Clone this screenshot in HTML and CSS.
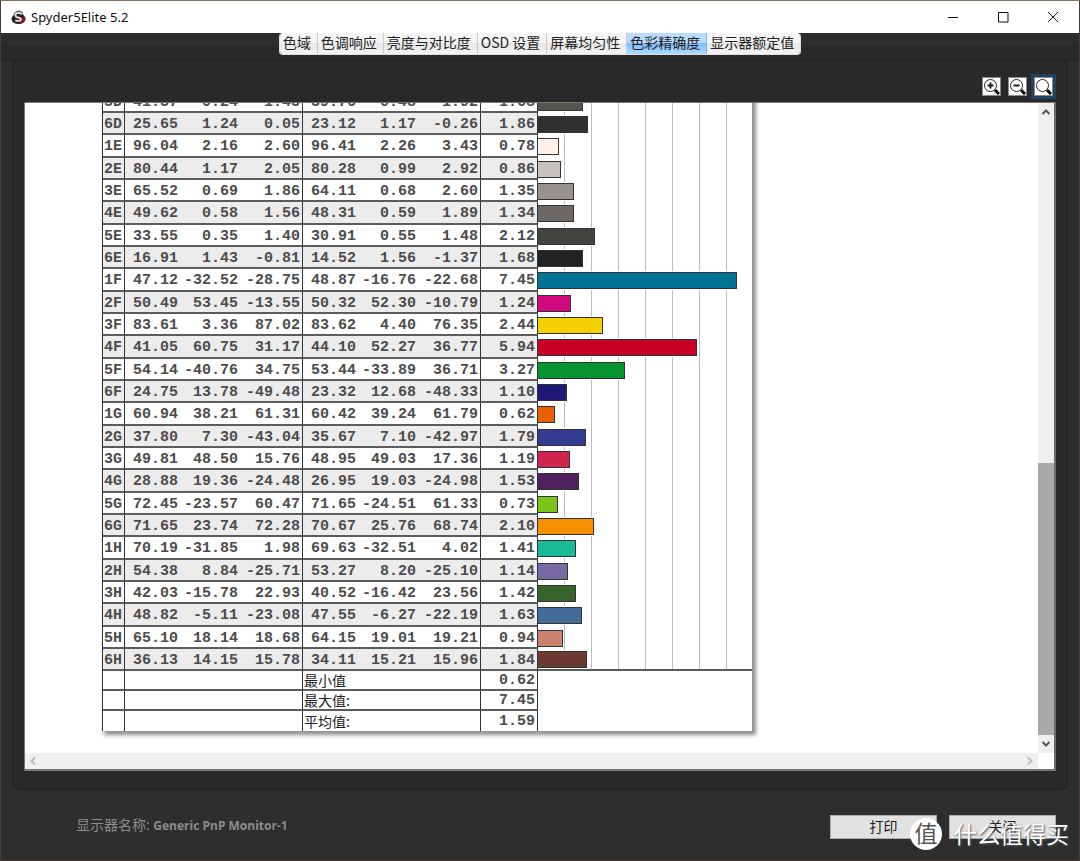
FILE: index.html
```
<!DOCTYPE html>
<html lang="zh-CN">
<head>
<meta charset="utf-8">
<title>Spyder5Elite 5.2</title>
<link rel="stylesheet" href="styles.css">
</head>
<body>
<header class="titlebar">
  <svg class="logo" viewBox="0 0 16 16" aria-hidden="true">
    <path d="M2.500 7Q3 1 8 0.500T13.500 7" fill="#666"/>
    <ellipse cx="8" cy="9.500" rx="7.500" ry="5.500" fill="#222"/>
    <path d="M9 8h6.500Q15 14 9 14.500z" fill="#8d1230"/>
    <path d="M11.500 4.500Q8 2 5.500 4T7 8Q11 8.500 10.500 10.500T4.500 11" fill="none" stroke="#e4e4e4" stroke-width="2"/>
  </svg>
  <h1 class="title">Spyder5Elite 5.2</h1>
  <div class="window-controls">
    <button class="window-button" aria-label="最小化"><svg viewBox="0 0 12 12"><path d="M1 6.500h10"/></svg></button>
    <button class="window-button" aria-label="最大化"><svg viewBox="0 0 12 12"><path d="M1.500 1.500h9.500v9.500h-9.500z"/></svg></button>
    <button class="window-button" aria-label="关闭窗口"><svg viewBox="0 0 12 12"><path d="M1 1l10 10M11 1L1 11"/></svg></button>
  </div>
</header>
<nav class="tabbar">
  <div class="tabs">
    <button class="tab">色域</button><button class="tab">色调响应</button><button class="tab">亮度与对比度</button><button class="tab">OSD 设置</button><button class="tab">屏幕均匀性</button><button class="tab tab-active">色彩精确度</button><button class="tab">显示器额定值</button>
  </div>
</nav>
<main class="panel">
  <div class="toolbar">
    <button class="tool" aria-label="放大"><svg viewBox="0 0 17 17"><circle cx="7.500" cy="7.500" r="6"/><path d="M4.500 7.500h6M7.500 4.500v6" stroke-width="2"/><path class="handle" d="M12 12l4 4"/></svg></button>
    <button class="tool" aria-label="缩小"><svg viewBox="0 0 17 17"><circle cx="7.500" cy="7.500" r="6"/><path d="M4.500 7.500h6" stroke-width="2"/><path class="handle" d="M12 12l4 4"/></svg></button>
    <button class="tool tool-active" aria-label="缩放"><svg viewBox="0 0 17 17"><circle cx="7.500" cy="7.500" r="6"/><path class="handle" d="M12 12l4 4"/></svg></button>
  </div>
  <section class="viewer">
    <div class="page-area">
      <div class="paper">
        <table class="report">
          <colgroup><col class="c-id"><col class="c-first"><col class="c-mid"><col class="c-last"><col class="c-first"><col class="c-mid"><col class="c-last"><col class="c-delta"><col></colgroup>
          <tbody id="samples"></tbody>
          <tbody class="summary">
            <tr><td></td><td colspan="3"></td><td colspan="3" class="name">最小值</td><td>0.62</td><td class="blank"></td></tr>
            <tr><td></td><td colspan="3"></td><td colspan="3" class="name">最大值:</td><td>7.45</td><td class="blank"></td></tr>
            <tr><td></td><td colspan="3"></td><td colspan="3" class="name">平均值:</td><td>1.59</td><td class="blank"></td></tr>
          </tbody>
        </table>
      </div>
    </div>
    <div class="vscroll">
      <svg class="arrow" viewBox="0 0 16 16"><path d="M4.500 10L8 6.500L11.500 10"/></svg>
      <div class="track"></div>
      <div class="thumb"></div>
      <svg class="arrow" viewBox="0 0 16 16"><path d="M4.500 6L8 9.500L11.500 6"/></svg>
    </div>
    <div class="hscroll">
      <svg class="arrow" viewBox="0 0 16 16"><path d="M10 4.500L6.500 8L10 11.500"/></svg>
      <svg class="arrow" viewBox="0 0 16 16"><path d="M6 4.500L9.500 8L6 11.500"/></svg>
    </div>
  </section>
</main>
<footer class="footer">
  <p class="monitor">显示器名称: <b>Generic PnP Monitor-1</b></p>
  <div class="actions">
    <button class="action">打印</button>
    <button class="action">关闭</button>
  </div>
</footer>
<div class="watermark"><span class="seal">值</span><span>什么值得买</span></div>
<script src="report.js"></script>
</body>
</html>
```

FILE: styles.css
```
* { box-sizing: border-box; }
body {
  margin: 0;
  height: 100vh;
  display: flex;
  flex-direction: column;
  overflow: hidden;
  position: relative;
  background: #2e2e2e;
  border: 1px solid #4a3a34;
  border-top-color: #8a705f;
  font-family: "Open Sans", "Noto Sans CJK SC", sans-serif;
}
button { font: inherit; margin: 0; padding: 0; border: 0; }
.titlebar {
  display: flex;
  align-items: center;
  height: 32px;
  flex: none;
  background: #fff;
  padding-left: 10px;
}
.logo { width: 15px; height: 15px; }
.title { margin: 0 0 0 5px; font-family: "Noto Sans", sans-serif; font-size: 13px; font-weight: 400; color: #111; }
.window-controls { margin-left: auto; display: flex; padding-right: 1px; }
.window-button { width: 50px; height: 32px; background: none; display: grid; place-items: center; }
.window-button svg { width: 12px; height: 12px; fill: none; stroke: #111; }
.tabbar {
  flex: none;
  height: 28px;
  display: flex;
  justify-content: center;
  align-items: flex-start;
  background: linear-gradient(#2e2e2e 12px, #242424 13px, #292929 15px);
  border-bottom: 1px solid #222;
  border-radius: 0 0 4px 4px;
}
.tabs {
  display: flex;
  height: 22px;
  border: 1px solid #ddd;
  border-top: 0;
  border-radius: 4px;
  overflow: hidden;
}
.tab {
  padding: 0 6px 2px 3px;
  font-family: "Noto Sans CJK SC", sans-serif;
  font-size: 14px;
  line-height: 19px;
  color: #222;
  white-space: nowrap;
  background: linear-gradient(#f5f5f5 45%, #e6e6e6 50%, #f4f4f4);
  border-right: 1px solid #ccc;
}
.tab:last-child { border-right: 0; }
.tab-active { background: linear-gradient(#b9dbfd 45%, #7dbcff 50%, #b0daff); border-color: #7ab8f8; }
.panel {
  flex: 1;
  min-height: 0;
  margin: 0 11px;
  padding: 13px 11px 18px;
  display: flex;
  flex-direction: column;
  background: #292929;
  border: 1px solid #222;
  border-top: 0;
  border-radius: 0 0 6px 6px;
}
.toolbar { display: flex; justify-content: flex-end; gap: 1px; flex: none; height: 28px; }
.tool { width: 25px; height: 25px; border: 3px solid transparent; background: none; }
.tool svg { display: block; width: 19px; height: 19px; background: #fff; border: 1px solid #888; fill: none; stroke: #222; }
.tool .handle { stroke: #000; stroke-width: 3; }
.tool-active { border-color: #204361; }
.viewer {
  flex: 1;
  min-height: 0;
  display: grid;
  grid-template: minmax(0, 1fr) 16px / minmax(0, 1fr) 16px;
  background: #fff;
  border: 1px solid #777;
  border-right: 2px solid #6c6c6c;
  border-bottom: 2px solid #777;
}
.page-area {
  overflow: hidden;
  display: flex;
  flex-direction: column;
  justify-content: flex-end;
  padding: 0 0 22px 77px;
}
.paper { width: 650px; background: #fff; flex: none; box-shadow: 3px 3px 4px 1px #8f8f8f; }
.report {
  width: 100%;
  table-layout: fixed;
  border-collapse: separate;
  border-spacing: 0;
  border-left: 1px solid #333;
  font-family: "Liberation Mono", "Noto Sans CJK SC", monospace;
  font-size: 15px;
  line-height: 16px;
  color: #4c4c4c;
}
.c-id { width: 22px; }
.c-first { width: 55px; }
.c-mid { width: 60px; }
.c-last { width: 63px; }
.c-delta { width: 57px; }
.report td, .report th {
  height: 22px;
  padding: 3px 2px 0 0;
  text-align: right;
  font-weight: 700;
  border-bottom: 2px solid #5c5c5c;
  overflow: hidden;
  white-space: nowrap;
}
.report tr:nth-child(3n) > * { height: 23px; }
.report tr:nth-child(even) > * { background: #ececec; }
.report th, .report td:nth-child(4), .report td:nth-child(7), .report td:nth-child(8) { border-right: 1px solid #333; }
.report .chart { padding: 0; border: 0; }
.report tbody tr:nth-child(n) .chart { background: repeating-linear-gradient(90deg, #fff 0 26px, #bdbdbd 26px 27px); }
#samples tr:last-child .chart { border-bottom: 2px solid #5c5c5c; }
.bar { height: 17px; border: 1px solid #333; border-left: 0; box-shadow: 0 0 0 1px #fff; }
.report .summary tr:nth-child(n) td { height: 20px; padding-top: 1px; background: #fff; border-right: 1px solid #333; }
.report .summary tr:last-child td { border-bottom: 0; }
.report .summary tr:nth-child(n) td.name { padding: 0 0 1px 1px; text-align: left; font-size: 14px; font-weight: 400; font-family: "Noto Sans CJK SC", sans-serif; color: #222; }
.report .summary tr:nth-child(n) td.blank { border: 0; }
.vscroll { display: flex; flex-direction: column; background: #efefef; }
.arrow { flex: none; width: 16px; height: 18px; fill: none; stroke: #555; stroke-width: 2; }
.track { flex: 341; }
.thumb { flex: 272; background: #a9a9a9; }
.hscroll { display: flex; justify-content: space-between; background: #efefef; }
.hscroll .arrow { height: 16px; stroke: #bbb; }
.footer {
  flex: none;
  height: 70px;
  padding: 0 23px 2px 75px;
  display: flex;
  justify-content: space-between;
  align-items: center;
}
.monitor { margin: 0; color: #8c8c8c; font-size: 14px; }
.monitor b { font-size: 12px; }
.actions { display: flex; gap: 12px; padding-top: 6px; }
.action { width: 107px; height: 24px; background: #e1e1e1; border: 1px solid #adadad; color: #222; font-size: 14px; line-height: 20px; }
.watermark {
  position: absolute;
  right: 10px;
  bottom: 8px;
  display: flex;
  align-items: center;
  gap: 12px;
  color: #fff;
  font-size: 23px;
  line-height: 36px;
  text-shadow: 1px 1px 2px #555;
  pointer-events: none;
}
.seal {
  width: 32px;
  height: 32px;
  border-radius: 50%;
  background: #fff;
  color: #555;
  text-align: center;
  line-height: 30px;
  text-shadow: none;
}
```

FILE: report.js
```
// id, target L a b, measured L a b, delta E, swatch colour
const samples = `
5D 41.37 0.24 1.43 39.76 0.48 1.92 1.68 #53544d
6D 25.65 1.24 0.05 23.12 1.17 -0.26 1.86 #322f30
1E 96.04 2.16 2.60 96.41 2.26 3.43 0.78 #fff0e9
2E 80.44 1.17 2.05 80.28 0.99 2.92 0.86 #c7c2be
3E 65.52 0.69 1.86 64.11 0.68 2.60 1.35 #97928d
4E 49.62 0.58 1.56 48.31 0.59 1.89 1.34 #6c6865
5E 33.55 0.35 1.40 30.91 0.55 1.48 2.12 #43433f
6E 16.91 1.43 -0.81 14.52 1.56 -1.37 1.68 #232224
1F 47.12 -32.52 -28.75 48.87 -16.76 -22.68 7.45 #007495
2F 50.49 53.45 -13.55 50.32 52.30 -10.79 1.24 #d1087f
3F 83.61 3.36 87.02 83.62 4.40 76.35 2.44 #f3d000
4F 41.05 60.75 31.17 44.10 52.27 36.77 5.94 #c80025
5F 54.14 -40.76 34.75 53.44 -33.89 36.71 3.27 #069430
6F 24.75 13.78 -49.48 23.32 12.68 -48.33 1.10 #1e1879
1G 60.94 38.21 61.31 60.42 39.24 61.79 0.62 #e96000
2G 37.80 7.30 -43.04 35.67 7.10 -42.97 1.79 #343c92
3G 49.81 48.50 15.76 48.95 49.03 17.36 1.19 #d0254e
4G 28.88 19.36 -24.48 26.95 19.03 -24.98 1.53 #4f215f
5G 72.45 -23.57 60.47 71.65 -24.51 61.33 0.73 #7dc419
6G 71.65 23.74 72.28 70.67 25.76 68.74 2.10 #f79000
1H 70.19 -31.85 1.98 69.63 -32.51 4.02 1.41 #19ba98
2H 54.38 8.84 -25.71 53.27 8.20 -25.10 1.14 #7868a4
3H 42.03 -15.78 22.93 40.52 -16.42 23.56 1.42 #38632d
4H 48.82 -5.11 -23.08 47.55 -6.27 -22.19 1.63 #426b99
5H 65.10 18.14 18.68 64.15 19.01 19.21 0.94 #c98370
6H 36.13 14.15 15.78 34.11 15.21 15.96 1.84 #6c3a30`;

const SCALE_MAX = 8;

document.getElementById("samples").innerHTML = samples.trim().split("\n").map((line) => {
  const [id, ...rest] = line.split(" ");
  const color = rest.pop();
  const width = (rest[6] / SCALE_MAX) * 100;
  return `<tr><th scope="row">${id}</th>${rest.map((v) => `<td>${v}</td>`).join("")}` +
    `<td class="chart"><div class="bar" style="width:${width}%;background:${color}"></div></td></tr>`;
}).join("");
```
